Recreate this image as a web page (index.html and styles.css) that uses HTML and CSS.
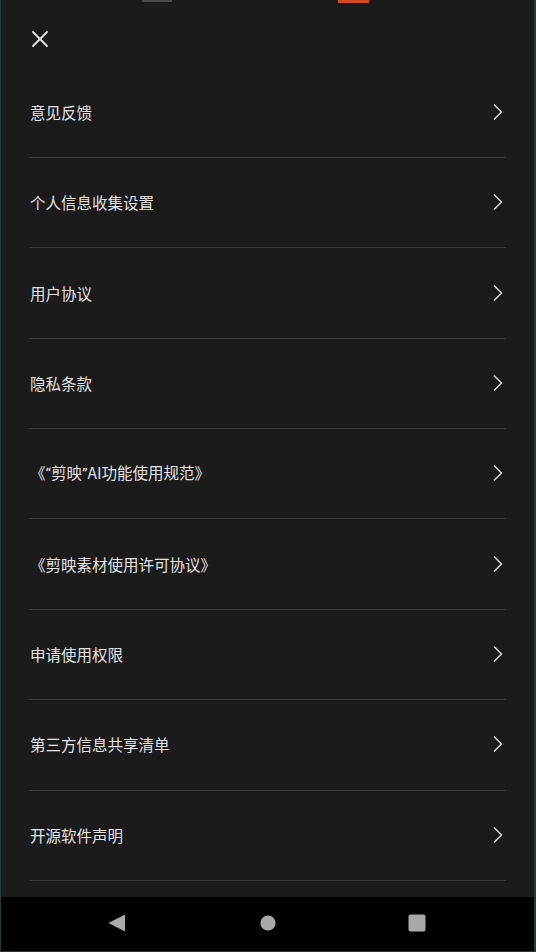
FILE: index.html
```html
<!DOCTYPE html>
<html lang="zh-CN">
<head>
<meta charset="utf-8">
<title>设置</title>
<link rel="stylesheet" href="styles.css">
</head>
<body>
<div class="screen">
  <div class="status-frag frag-gray"></div>
  <div class="status-frag frag-orange"></div>
  <main class="content">
    <header class="header">
      <svg class="close" width="16" height="16" viewBox="0 0 16 16" aria-label="关闭">
        <path d="M1 1 L15 15 M15 1 L1 15" stroke="#e4e4e4" stroke-width="1.8" stroke-linecap="round" fill="none"/>
      </svg>
    </header>
    <ul class="list">
      <li class="row"><span class="label">意见反馈</span><svg class="chev" width="10" height="16" viewBox="0 0 10 16"><path d="M1.5 1 L8.5 8 L1.5 15" stroke="#d2d2d2" stroke-width="1.6" fill="none" stroke-linecap="round" stroke-linejoin="round"/></svg></li>
      <li class="row"><span class="label">个人信息收集设置</span><svg class="chev" width="10" height="16" viewBox="0 0 10 16"><path d="M1.5 1 L8.5 8 L1.5 15" stroke="#d2d2d2" stroke-width="1.6" fill="none" stroke-linecap="round" stroke-linejoin="round"/></svg></li>
      <li class="row"><span class="label">用户协议</span><svg class="chev" width="10" height="16" viewBox="0 0 10 16"><path d="M1.5 1 L8.5 8 L1.5 15" stroke="#d2d2d2" stroke-width="1.6" fill="none" stroke-linecap="round" stroke-linejoin="round"/></svg></li>
      <li class="row"><span class="label">隐私条款</span><svg class="chev" width="10" height="16" viewBox="0 0 10 16"><path d="M1.5 1 L8.5 8 L1.5 15" stroke="#d2d2d2" stroke-width="1.6" fill="none" stroke-linecap="round" stroke-linejoin="round"/></svg></li>
      <li class="row"><span class="label">《<span class="q">“</span>剪映<span class="q">”</span>AI功能使用规范》</span><svg class="chev" width="10" height="16" viewBox="0 0 10 16"><path d="M1.5 1 L8.5 8 L1.5 15" stroke="#d2d2d2" stroke-width="1.6" fill="none" stroke-linecap="round" stroke-linejoin="round"/></svg></li>
      <li class="row"><span class="label">《剪映素材使用许可协议》</span><svg class="chev" width="10" height="16" viewBox="0 0 10 16"><path d="M1.5 1 L8.5 8 L1.5 15" stroke="#d2d2d2" stroke-width="1.6" fill="none" stroke-linecap="round" stroke-linejoin="round"/></svg></li>
      <li class="row"><span class="label">申请使用权限</span><svg class="chev" width="10" height="16" viewBox="0 0 10 16"><path d="M1.5 1 L8.5 8 L1.5 15" stroke="#d2d2d2" stroke-width="1.6" fill="none" stroke-linecap="round" stroke-linejoin="round"/></svg></li>
      <li class="row"><span class="label">第三方信息共享清单</span><svg class="chev" width="10" height="16" viewBox="0 0 10 16"><path d="M1.5 1 L8.5 8 L1.5 15" stroke="#d2d2d2" stroke-width="1.6" fill="none" stroke-linecap="round" stroke-linejoin="round"/></svg></li>
      <li class="row"><span class="label">开源软件声明</span><svg class="chev" width="10" height="16" viewBox="0 0 10 16"><path d="M1.5 1 L8.5 8 L1.5 15" stroke="#d2d2d2" stroke-width="1.6" fill="none" stroke-linecap="round" stroke-linejoin="round"/></svg></li>
    </ul>
  </main>
  <nav class="navbar">
    <svg class="nav-icon" width="18" height="18" viewBox="0 0 18 18"><path d="M0.5 9 L17 0.5 L17 17.5 Z" fill="#a9a9a9"/></svg>
    <svg class="nav-icon" width="16" height="16" viewBox="0 0 16 16"><circle cx="8" cy="8" r="7.6" fill="#a9a9a9"/></svg>
    <svg class="nav-icon" width="18" height="18" viewBox="0 0 18 18"><rect x="0.5" y="0.5" width="17" height="17" rx="2" fill="#a9a9a9"/></svg>
  </nav>
</div>
</body>
</html>
```

FILE: styles.css
```css
* {
  box-sizing: border-box;
}

html, body {
  margin: 0;
  padding: 0;
  height: 952px;
  background: #1b1b1b;
}

body {
  font-family: "Noto Sans CJK SC", "Noto Sans", sans-serif;
  color: #e2e2e2;
}

.screen {
  position: relative;
  width: 536px;
  height: 952px;
  display: flex;
  flex-direction: column;
  border-left: 1px solid #223c37;
  border-right: 2px solid #223c37;
  border-bottom: 1px solid #223c37;
  overflow: hidden;
}

.status-frag {
  position: absolute;
  top: 0;
  height: 2px;
}

.frag-gray {
  left: 141px;
  width: 30px;
  background: #4a4a4a;
}

.frag-orange {
  left: 337px;
  width: 31px;
  height: 3px;
  background: #d24a1e;
}

.content {
  flex: 1;
  display: flex;
  flex-direction: column;
  background: #1b1b1b;
  overflow: hidden;
}

.header {
  height: 67.6px;
  flex-shrink: 0;
  display: flex;
  align-items: flex-start;
  padding: 31px 0 0 31px;
}

.close {
  display: block;
}

.list {
  list-style: none;
  margin: 0;
  padding: 0 28px 0 28px;
}

.row {
  height: 90.375px;
  display: flex;
  align-items: center;
  justify-content: space-between;
  border-bottom: 1px solid #3a3a3a;
  padding: 0 3px 1px 1px;
}

.label {
  font-size: 15.5px;
  line-height: 20px;
  color: #e2e2e2;
  letter-spacing: 0;
}

.q {
  font-family: "Roboto", "Noto Sans", sans-serif;
}

.chev {
  display: block;
}

.navbar {
  height: 54px;
  flex-shrink: 0;
  background: #000;
  display: flex;
  align-items: center;
  position: relative;
}

.nav-icon {
  position: absolute;
  top: 17px;
}

.nav-icon:nth-child(1) {
  left: 107px;
}

.nav-icon:nth-child(2) {
  left: 259px;
  top: 18px;
}

.nav-icon:nth-child(3) {
  left: 407px;
}
```
